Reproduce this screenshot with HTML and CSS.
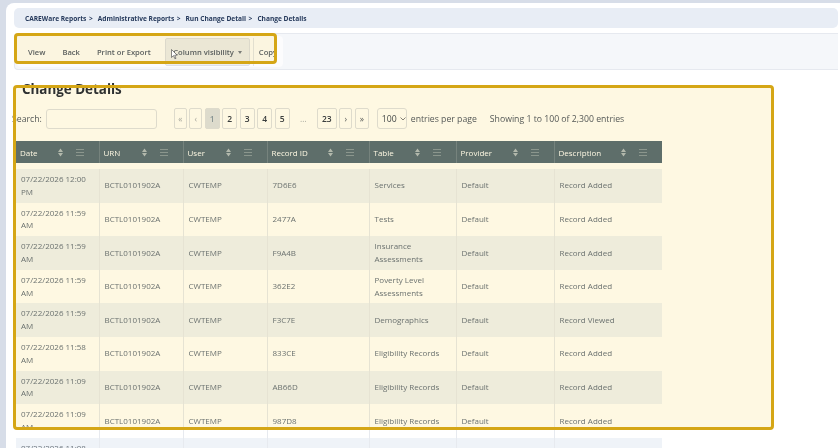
FILE: index.html
```html
<!DOCTYPE html>
<html lang="en">
<head>
<meta charset="utf-8">
<title>Change Details</title>
<link rel="stylesheet" href="styles.css">
</head>
<body>
<div class="shell">
  <nav class="crumbs"><span>CAREWare Reports</span><span class="sep">&gt;</span><span>Administrative Reports</span><span class="sep">&gt;</span><span>Run Change Detail</span><span class="sep">&gt;</span><span>Change Details</span></nav>
  <div class="toolbar">
    <div class="btn-group">
      <span class="btn b-view">View</span>
      <span class="btn">Back</span>
      <span class="btn">Print or Export</span>
      <span class="btn btn-active">Column visibility<i class="caret"></i></span>
      <span class="btn btn-copy">Copy</span>
    </div>
  </div>
  <section class="content">
    <h1 class="title">Change Details</h1>
    <div class="controls">
      <label class="search">Search:<span class="input"></span></label>
      <div class="pager">
        <span class="pg nav">&laquo;</span>
        <span class="pg nav">&lsaquo;</span>
        <span class="pg num cur">1</span>
        <span class="pg num">2</span>
        <span class="pg num">3</span>
        <span class="pg num">4</span>
        <span class="pg num">5</span>
        <span class="pg dots">&hellip;</span>
        <span class="pg num wide">23</span>
        <span class="pg nav dark">&rsaquo;</span>
        <span class="pg nav dark w14">&raquo;</span>
      </div>
      <span class="select">100<svg class="chev" viewBox="0 0 6 4" width="6" height="4"><path d="M0.5 0.5 L3 3 L5.5 0.5" fill="none" stroke="#777" stroke-width="0.9"/></svg></span>
      <span class="per">entries per page</span>
      <span class="info">Showing 1 to 100 of 2,300 entries</span>
    </div>

    <table class="grid head">
      <colgroup><col class="c1"><col class="c2"><col class="c3"><col class="c4"><col class="c5"><col class="c6"><col class="c7"></colgroup>
      <thead>
        <tr>
          <th><div class="th"><span class="lbl">Date</span><svg class="sort" viewBox="0 0 5 9"><path d="M0 4 L2.5 0.5 L5 4Z M0 5 L5 5 L2.5 8.5Z"/></svg><svg class="menu" viewBox="0 0 8 7"><path d="M0 0.5H8M0 3.5H8M0 6.5H8"/></svg></div></th>
          <th><div class="th"><span class="lbl">URN</span><svg class="sort" viewBox="0 0 5 9"><path d="M0 4 L2.5 0.5 L5 4Z M0 5 L5 5 L2.5 8.5Z"/></svg><svg class="menu" viewBox="0 0 8 7"><path d="M0 0.5H8M0 3.5H8M0 6.5H8"/></svg></div></th>
          <th><div class="th"><span class="lbl">User</span><svg class="sort" viewBox="0 0 5 9"><path d="M0 4 L2.5 0.5 L5 4Z M0 5 L5 5 L2.5 8.5Z"/></svg><svg class="menu" viewBox="0 0 8 7"><path d="M0 0.5H8M0 3.5H8M0 6.5H8"/></svg></div></th>
          <th><div class="th"><span class="lbl">Record ID</span><svg class="sort" viewBox="0 0 5 9"><path d="M0 4 L2.5 0.5 L5 4Z M0 5 L5 5 L2.5 8.5Z"/></svg><svg class="menu" viewBox="0 0 8 7"><path d="M0 0.5H8M0 3.5H8M0 6.5H8"/></svg></div></th>
          <th><div class="th"><span class="lbl">Table</span><svg class="sort" viewBox="0 0 5 9"><path d="M0 4 L2.5 0.5 L5 4Z M0 5 L5 5 L2.5 8.5Z"/></svg><svg class="menu" viewBox="0 0 8 7"><path d="M0 0.5H8M0 3.5H8M0 6.5H8"/></svg></div></th>
          <th><div class="th"><span class="lbl">Provider</span><svg class="sort" viewBox="0 0 5 9"><path d="M0 4 L2.5 0.5 L5 4Z M0 5 L5 5 L2.5 8.5Z"/></svg><svg class="menu" viewBox="0 0 8 7"><path d="M0 0.5H8M0 3.5H8M0 6.5H8"/></svg></div></th>
          <th><div class="th"><span class="lbl">Description</span><svg class="sort" viewBox="0 0 5 9"><path d="M0 4 L2.5 0.5 L5 4Z M0 5 L5 5 L2.5 8.5Z"/></svg><svg class="menu" viewBox="0 0 8 7"><path d="M0 0.5H8M0 3.5H8M0 6.5H8"/></svg></div></th>
        </tr>
      </thead>
    </table>

    <table class="grid body">
      <colgroup><col class="c1"><col class="c2"><col class="c3"><col class="c4"><col class="c5"><col class="c6"><col class="c7"></colgroup>
      <tbody>
        <tr><td>07/22/2026 12:00 PM</td><td>BCTL0101902A</td><td>CWTEMP</td><td>7D6E6</td><td>Services</td><td>Default</td><td>Record Added</td></tr>
        <tr><td>07/22/2026 11:59 AM</td><td>BCTL0101902A</td><td>CWTEMP</td><td>2477A</td><td>Tests</td><td>Default</td><td>Record Added</td></tr>
        <tr><td>07/22/2026 11:59 AM</td><td>BCTL0101902A</td><td>CWTEMP</td><td>F9A4B</td><td>Insurance Assessments</td><td>Default</td><td>Record Added</td></tr>
        <tr><td>07/22/2026 11:59 AM</td><td>BCTL0101902A</td><td>CWTEMP</td><td>362E2</td><td>Poverty Level Assessments</td><td>Default</td><td>Record Added</td></tr>
        <tr><td>07/22/2026 11:59 AM</td><td>BCTL0101902A</td><td>CWTEMP</td><td>F3C7E</td><td>Demographics</td><td>Default</td><td>Record Viewed</td></tr>
        <tr><td>07/22/2026 11:58 AM</td><td>BCTL0101902A</td><td>CWTEMP</td><td>833CE</td><td>Eligibility Records</td><td>Default</td><td>Record Added</td></tr>
        <tr><td>07/22/2026 11:09 AM</td><td>BCTL0101902A</td><td>CWTEMP</td><td>AB66D</td><td>Eligibility Records</td><td>Default</td><td>Record Added</td></tr>
        <tr><td>07/22/2026 11:09 AM</td><td>BCTL0101902A</td><td>CWTEMP</td><td>987D8</td><td>Eligibility Records</td><td>Default</td><td>Record Added</td></tr>
        <tr><td>07/22/2026 11:08 AM</td><td>BCTL0101902A</td><td>CWTEMP</td><td>5B21C</td><td>Eligibility Records</td><td>Default</td><td>Record Added</td></tr>
      </tbody>
    </table>
  </section>
</div>

<div class="hl hl-toolbar"></div>
<div class="hl hl-main"></div>
<svg class="cursor" viewBox="0 0 7 11" width="7" height="11"><path d="M0.5 0.5 L0.5 8.5 L2.5 6.6 L3.9 9.8 L5 9.3 L3.7 6.2 L6.2 6.2 Z" fill="#fff" stroke="#555" stroke-width="0.7"/></svg>
</body>
</html>
```

FILE: styles.css
```css
* { box-sizing: border-box; }
html, body { margin: 0; padding: 0; }
body {
  width: 840px;
  height: 448px;
  overflow: hidden;
  position: relative;
  background: #d7dde8;
  font-family: "Open Sans", "Noto Sans", sans-serif;
}

.shell {
  margin: 3px 0 0 6px;
  height: 445px;
  overflow: hidden;
  background: #ffffff;
  border-radius: 8px 0 0 0;
  padding: 5px 2px 0 8px;
}

.crumbs {
  height: 20px;
  background: #e8edf5;
  border-radius: 5px;
  padding-left: 11px;
  display: flex;
  align-items: center;
  font-size: 6.6px;
  font-weight: 700;
  color: #25395b;
  white-space: nowrap;
}
.sep { margin: 0 5px 0 2.5px; }

.toolbar {
  margin-top: 5px;
  height: 37px;
  background: #f5f7fa;
  border: 1px solid #e6e9ef;
  border-right: 0;
  border-radius: 4px 0 0 4px;
  padding: 2px 0 0 2px;
}
.btn-group {
  width: 266px;
  height: 31px;
  background: #fcfcfd;
  border-radius: 4px;
  display: flex;
  align-items: center;
  overflow: hidden;
  font-size: 7.6px;
  font-weight: 600;
  color: #5b626a;
}
.btn {
  padding: 0 8.5px;
  white-space: nowrap;
  line-height: 28px;
}
.b-view { padding-left: 11px; }
.btn-active {
  margin-left: 6px;
  padding: 0 7px;
  height: 28px;
  line-height: 26px;
  align-self: flex-start;
  margin-top: 2px;
  background: #eceef1;
  border: 1px solid #dde0e5;
  border-radius: 2px;
}
.caret {
  display: inline-block;
  vertical-align: middle;
  margin: -1px 0 0 4px;
  border-left: 2.5px solid transparent;
  border-right: 2.5px solid transparent;
  border-top: 3px solid #7a7f86;
}
.btn-copy {
  margin-left: 3px;
  padding-left: 5px;
  border-left: 1px solid #e3e6ea;
}

.content { margin-left: -2px; }
.title {
  margin: 10px 0 0 10px;
  font-size: 13.4px;
  line-height: 18px;
  font-weight: 700;
  color: #2e3237;
}

.controls {
  margin-top: 10px;
  height: 21px;
  display: flex;
  align-items: center;
  font-size: 8.7px;
  color: #555b61;
}
.search { display: flex; align-items: center; }
.input {
  display: block;
  margin-left: 4px;
  width: 111px;
  height: 20px;
  background: #fff;
  border: 1px solid #dfe2e6;
  border-radius: 3px;
}
.pager {
  margin-left: 17px;
  display: flex;
  gap: 2.5px;
}
.pg {
  height: 21px;
  display: flex;
  align-items: center;
  justify-content: center;
  background: #fff;
  border: 1px solid #dfe2e6;
  border-radius: 2px;
  font-size: 8.5px;
  font-weight: 600;
  color: #3a3f44;
}
.pg.nav { width: 13px; font-weight: 400; color: #a9aeb3; }
.pg.nav.dark { color: #5b6066; }
.pg.w14 { width: 14px; }
.pg.num { width: 15px; }
.pg.wide { width: 20px; }
.pg.cur { background: #dee2e6; color: #8a99a6; }
.pg.dots { width: 22px; border: 0; background: transparent; color: #a9aeb3; font-weight: 400; }

.select {
  margin-left: 8px;
  width: 30px;
  height: 21px;
  display: flex;
  align-items: center;
  padding-left: 4px;
  gap: 3px;
  background: #fff;
  border: 1px solid #dfe2e6;
  border-radius: 3px;
  color: #444a50;
}
.per { margin-left: 4px; }
.info { margin-left: 13px; }

.grid {
  margin-left: 4px;
  width: 646px;
  table-layout: fixed;
  border-collapse: collapse;
}
.c1 { width: 83px; }
.c2 { width: 84px; }
.c3 { width: 84px; }
.c4 { width: 102px; }
.c5 { width: 87px; }
.c6 { width: 98px; }
.c7 { width: 108px; }

.head { margin-top: 12px; }
.head th {
  height: 22px;
  padding: 0 0 0 4px;
  background: #5e7178;
  border-right: 1px solid #76878d;
  color: #ffffff;
  font-size: 8px;
  font-weight: 400;
  text-align: left;
}
.head th:last-child { border-right: 0; }
.th { display: flex; align-items: center; }
.lbl { flex: 1; white-space: nowrap; }
.sort {
  width: 5px;
  height: 9px;
  margin-right: 13px;
  fill: #b3bdc1;
}
.menu {
  width: 8px;
  height: 7px;
  margin-right: 15px;
  stroke: #8c9a9f;
  stroke-width: 1;
  fill: none;
}

.body { margin-top: 6px; }
.body tr { height: 33.6px; }
.body tr:nth-child(odd) td { background: #eff3f8; }
.body td {
  padding: 4px 5px;
  font-size: 8px;
  line-height: 12.8px;
  color: #6c757d;
  border-right: 1px solid #e7eaef;
  vertical-align: middle;
}
.body td:last-child { border-right: 0; }

.hl {
  position: absolute;
  border: 3px solid #d5a615;
  border-radius: 4px;
}
.hl::before {
  content: "";
  position: absolute;
  inset: 0;
  background: #fef8e2;
  mix-blend-mode: multiply;
}
.hl-toolbar { left: 14px; top: 33px; width: 263px; height: 31px; }
.hl-main { left: 13px; top: 85px; width: 761px; height: 345px; }

.cursor { position: absolute; left: 171px; top: 49px; }
```
